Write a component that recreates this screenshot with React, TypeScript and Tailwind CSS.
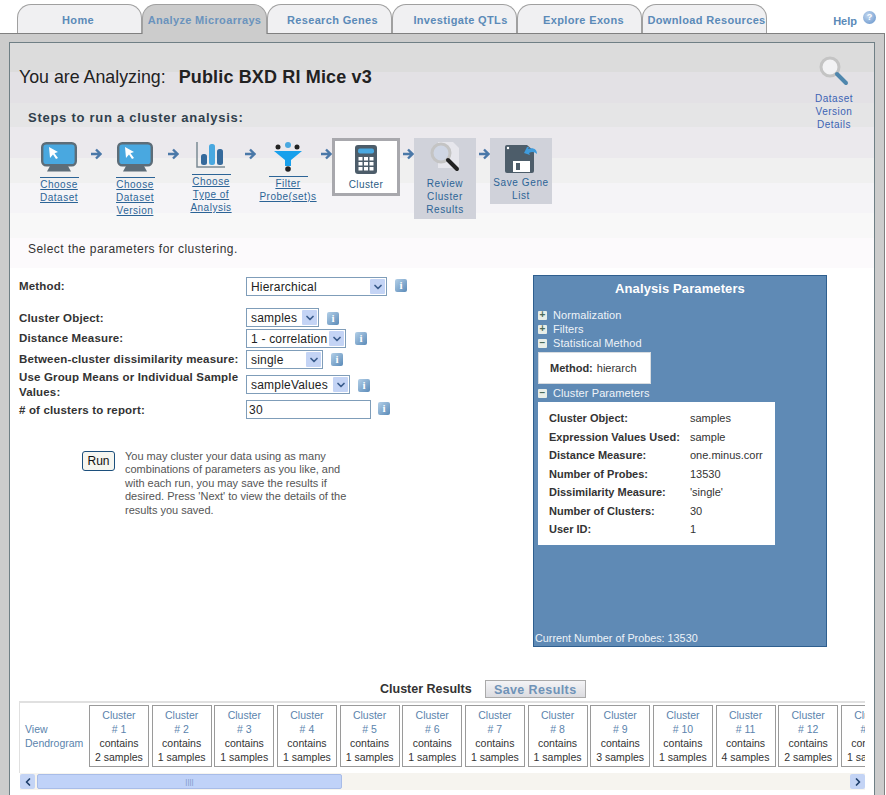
import { ChevronDown, ChevronLeft, ChevronRight } from 'lucide-react';

const tabs = [
  { label: 'Home', offset: 'pr-[3px]' },
  { label: 'Analyze Microarrays', offset: '', active: true },
  { label: 'Research Genes', offset: 'pl-[6px]' },
  { label: 'Investigate QTLs', offset: 'pl-[12px]' },
  { label: 'Explore Exons', offset: 'pl-[8px]' },
  { label: 'Download Resources', offset: 'pl-[4px]' },
];

const clusters = [
  [1, 2], [2, 1], [3, 1], [4, 1], [5, 1], [6, 1], [7, 1],
  [8, 1], [9, 3], [10, 1], [11, 4], [12, 2], [13, 1],
];

const clusterParams = [
  ['Cluster Object:', 'samples'],
  ['Expression Values Used:', 'sample'],
  ['Distance Measure:', 'one.minus.corr'],
  ['Number of Probes:', '13530'],
  ['Dissimilarity Measure:', "'single'"],
  ['Number of Clusters:', '30'],
  ['User ID:', '1'],
];

function Arrow() {
  return (
    <svg width="12" height="12" viewBox="0 0 12 12" className="shrink-0">
      <path d="M1 6h8M6 1.500 10.500 6 6 10.500" fill="none" stroke="#4a78a8" strokeWidth="2.400" />
    </svg>
  );
}

function MonitorIcon() {
  return (
    <svg width="36" height="30" viewBox="0 0 36 30">
      <rect x="1.200" y="1.200" width="33.600" height="22" rx="4" fill="#49a8e0" stroke="#5d6d78" strokeWidth="2.400" />
      <path d="M8 5l9 5-3.500 1.200L17 16l-2 1-3-4.500L9 16z" fill="#fff" />
      <path d="M9 24h18l3 5.500H6z" fill="#5d6d78" />
    </svg>
  );
}

function ChartIcon() {
  return (
    <svg width="30" height="26" viewBox="0 0 30 26">
      <path d="M1 0v25h28" fill="none" stroke="#7b8a94" strokeWidth="1.500" />
      <rect x="5" y="12" width="6" height="11" rx="2.500" fill="#356a9c" />
      <rect x="13" y="2" width="6" height="21" rx="2.500" fill="#49a8e0" />
      <rect x="21" y="7" width="6" height="16" rx="2.500" fill="#356a9c" />
    </svg>
  );
}

function FunnelIcon() {
  return (
    <svg width="30" height="30" viewBox="0 0 30 30">
      <circle cx="15" cy="3" r="3" fill="#49a8e0" />
      <circle cx="5" cy="5" r="2.500" fill="#222" />
      <circle cx="24" cy="5" r="2.500" fill="#222" />
      <path d="M1 9h28L18 18v6h-6v-6z" fill="#18a0ec" />
      <circle cx="15" cy="27" r="2.800" fill="#222" />
    </svg>
  );
}

function CalculatorIcon() {
  return (
    <svg width="22" height="29" viewBox="0 0 22 29">
      <rect width="22" height="29" rx="3" fill="#4d5d6a" />
      <rect x="3" y="3.500" width="16" height="5" rx="2" fill="#49a8e0" />
      {[12, 17, 22].map((y) =>
        [3.500, 9, 14.500].map((x) => <rect key={`${x}-${y}`} x={x} y={y} width="4" height="3.500" fill="#fff" />)
      )}
    </svg>
  );
}

function MagnifierIcon({ paper = false }: { paper?: boolean }) {
  return (
    <svg width="30" height="30" viewBox="0 0 30 30">
      {paper && <path d="M8 0h15l6 6v20H8z" fill="#e6e6ec" />}
      <circle cx="11" cy="11" r="9" fill={paper ? '#cfd6e4' : '#f2f2f4'} stroke="#c4c4c4" strokeWidth="3" />
      <path d="M18 18l9 9" stroke={paper ? '#222' : '#4f86ad'} strokeWidth="4" strokeLinecap="round" />
    </svg>
  );
}

function SaveIcon() {
  return (
    <svg width="34" height="30" viewBox="0 0 34 30">
      <path d="M1 4a2 2 0 0 1 2-2h20l7 6v20a2 2 0 0 1-2 2H3a2 2 0 0 1-2-2z" fill="#4d5d6a" />
      <rect x="9" y="18" width="17" height="11" fill="#fff" />
      <rect x="12" y="20" width="4" height="7" fill="#4d5d6a" />
      <circle cx="4" cy="5" r="1.200" fill="#fff" />
      <path d="M20 10l3-6h2l-1 2c5-2 9 0 9 5-2-2-5-3-8-1l1 2z" fill="#3f9bdc" />
    </svg>
  );
}

function InfoIcon() {
  return (
    <span className="flex h-[13px] w-[12px] shrink-0 items-center justify-center rounded-[2px] bg-[linear-gradient(135deg,#b4d0e8,#5a8ab8)] font-['Liberation_Serif',serif] text-[11px] leading-none font-bold text-white">
      i
    </span>
  );
}

function SelectBox({ value, width }: { value: string; width: string }) {
  return (
    <div className={`flex h-[19px] shrink-0 items-center justify-between border border-[#7f9db9] bg-white pr-px pl-1 text-[12px] font-normal tracking-[0.2px] text-[#222] ${width}`}>
      <span className="whitespace-nowrap">{value}</span>
      <span className="flex h-[15px] w-[15px] shrink-0 items-center justify-center rounded-[1px] bg-[#c4d4f5]">
        <ChevronDown size={12} strokeWidth={3.500} className="text-[#3a5c8c]" />
      </span>
    </div>
  );
}

function TreeToggle({ open, label }: { open?: boolean; label: string }) {
  return (
    <div className="flex h-[14px] items-center gap-[6px] text-[11px] tracking-[0.1px] text-[#eef3f8]">
      <span className="flex h-[9px] w-[9px] items-center justify-center rounded-[1px] bg-[#e8eee8] text-[10px] leading-none font-bold text-[#4a6a5a]">
        {open ? '−' : '+'}
      </span>
      {label}
    </div>
  );
}

function StepLink({ lines, width }: { lines: string[]; width: string }) {
  return (
    <div className={`${width} shrink-0 text-center text-[10px] leading-[13px] tracking-[0.5px] text-[#2c6496] underline`}>
      <div className="mx-auto h-px w-[39px] bg-[#2c6496]" />
      {lines.map((l) => (
        <div key={l} className="whitespace-nowrap">{l}</div>
      ))}
    </div>
  );
}

export default function App() {
  return (
    <div className="h-[795px] w-[886px] overflow-hidden bg-white font-['Liberation_Sans',Arial,sans-serif] text-[#333]">
      {/* Tabs */}
      <div className="flex h-[33px]">
        <div className="flex w-[773px] items-end pl-[17px]">
          {tabs.map((t) => (
            <div
              key={t.label}
              className={`flex w-[125px] items-center justify-center rounded-t-[14px] border border-b-0 border-[#a0a0a0] pt-[2px] text-[11px] font-bold tracking-[0.35px] whitespace-nowrap ${t.offset} ${
                t.active ? 'relative z-10 -mb-px h-[30px] bg-[#cccccc] text-[#6a93bd]' : 'h-[29px] bg-[#f0f0f2] text-[#5b8ab8]'
              }`}
            >
              {t.label}
            </div>
          ))}
        </div>
        <div className="flex flex-1 items-start justify-end gap-[6px] pt-[13px] pr-[10px] text-[11px] font-bold text-[#5b8ab8]">
          Help
          <span className="mt-[-2px] flex h-[13px] w-[13px] items-center justify-center rounded-full bg-[radial-gradient(circle_at_40%_35%,#c4d8f0,#5f8fc8)] text-[9px] text-white">?</span>
        </div>
      </div>

      {/* Outer frame */}
      <div className="h-[762px] w-[885px] border-t border-r border-[#808080] bg-[#cccccc] pt-[8px] pr-[9px] pl-[9px]">
        <div className="h-[760px] w-[866px] border border-[#6f7f85] bg-[linear-gradient(#dcdcdc_0,#dcdcdc_29px,#e3e1e5_29px,#e3e1e5_60px,#e5e5e6_60px,#e5e5e6_84px,#ebe9ed_84px,#ebe9ed_115px,#f0f0f0_115px,#f0f0f0_140px,#f5f4f7_140px,#f5f4f7_170px,#f8f8f8_170px,#f8f8f8_195px,#fcfafc_195px,#fcfafc_225px,#ffffff_225px)]">
          {/* Title row */}
          <div className="flex h-[66px] items-start pl-[9px]">
            <div className="mt-[23px] flex items-baseline text-[17.800px] leading-[22px] text-[#222]">
              <span>You are Analyzing:</span>
              <span className="ml-[13px] text-[18px] font-bold tracking-[0.15px]">Public BXD RI Mice v3</span>
            </div>
          </div>
          <div className="relative">
            <div className="absolute top-[-53px] right-[15px] flex w-[50px] flex-col items-center text-center text-[10px] leading-[13px] tracking-[0.5px] text-[#3c63b4]">
              <MagnifierIcon />
              <div className="mt-[6px]">Dataset</div>
              <div>Version</div>
              <div>Details</div>
            </div>
          </div>

          <div className="pl-[18px] text-[13px] leading-[18px] font-bold tracking-[0.73px] text-[#30404c]">
            Steps to run a cluster analysis:
          </div>

          {/* Steps */}
          <div className="mt-[11px] flex h-[81px] items-start pl-[18px]">
            <div className="flex w-[62px] shrink-0 flex-col items-center pt-[4px]">
              <MonitorIcon />
              <div className="mt-[5px]"><StepLink lines={['Choose', 'Dataset']} width="w-[60px]" /></div>
            </div>
            <div className="mt-[10px]"><Arrow /></div>
            <div className="ml-[3px] flex w-[60px] shrink-0 flex-col items-center pt-[4px]">
              <MonitorIcon />
              <div className="mt-[5px]"><StepLink lines={['Choose', 'Dataset', 'Version']} width="w-[60px]" /></div>
            </div>
            <div className="mt-[10px] ml-[2px]"><Arrow /></div>
            <div className="ml-[2px] flex w-[60px] shrink-0 flex-col items-center pt-[4px]">
              <ChartIcon />
              <div className="mt-[6px]"><StepLink lines={['Choose', 'Type of', 'Analysis']} width="w-[60px]" /></div>
            </div>
            <div className="mt-[10px] ml-[3px]"><Arrow /></div>
            <div className="ml-[2px] flex w-[60px] shrink-0 flex-col items-center pt-[4px]">
              <FunnelIcon />
              <div className="mt-[4px]"><StepLink lines={['Filter', 'Probe(set)s']} width="w-[60px]" /></div>
            </div>
            <div className="mt-[10px] ml-[2px]"><Arrow /></div>
            <div className="flex h-[58px] w-[68px] shrink-0 flex-col items-center border-[3px] border-[#a8a8ad] bg-white pt-[4px] text-[10px] tracking-[0.4px] text-[#2c5c84]">
              <CalculatorIcon />
              <div className="mt-[3px]">Cluster</div>
            </div>
            <div className="mt-[10px] ml-[2px]"><Arrow /></div>
            <div className="flex h-[81px] w-[62px] shrink-0 flex-col items-center bg-[#d0d2da] pt-[4px] text-center text-[10px] leading-[13px] tracking-[0.6px] text-[#2c6496]">
              <MagnifierIcon paper />
              <div className="mt-[5px]">Review</div>
              <div>Cluster</div>
              <div>Results</div>
            </div>
            <div className="mt-[10px] ml-[2px]"><Arrow /></div>
            <div className="flex h-[66px] w-[62px] shrink-0 flex-col items-center bg-[#d0d2da] pt-[5px] text-center text-[10px] leading-[13px] tracking-[0.6px] text-[#2c6496]">
              <SaveIcon />
              <div className="mt-[3px]">Save Gene</div>
              <div>List</div>
            </div>
          </div>

          <div className="mt-[22px] pl-[18px] text-[12px] leading-[16px] tracking-[0.46px] text-[#333]">
            Select the parameters for clustering.
          </div>

          {/* Form + panel */}
          <div className="mt-[18px] flex items-start">
            <div className="w-[523px] shrink-0 pt-[2px]">
              <div className="pl-[9px] text-[11.500px] font-bold tracking-[0.16px] text-[#333]">
                <div className="flex items-start">
                  <div className="w-[227px] shrink-0 pt-[1px]">Method:</div>
                  <SelectBox value="Hierarchical" width="w-[141px]" />
                  <div className="mt-[2px] ml-[8px]"><InfoIcon /></div>
                </div>
                <div className="mt-[12px] flex items-start">
                  <div className="w-[227px] shrink-0 pt-[2px]">Cluster Object:</div>
                  <SelectBox value="samples" width="w-[73px]" />
                  <div className="mt-[4px] ml-[8px]"><InfoIcon /></div>
                </div>
                <div className="mt-[2px] flex items-start">
                  <div className="w-[227px] shrink-0 pt-[1px]">Distance Measure:</div>
                  <SelectBox value="1 - correlation" width="w-[100px]" />
                  <div className="mt-[3px] ml-[9px]"><InfoIcon /></div>
                </div>
                <div className="mt-[2px] flex items-start">
                  <div className="w-[227px] shrink-0 pt-[1px] whitespace-nowrap">Between-cluster dissimilarity measure:</div>
                  <SelectBox value="single" width="w-[77px]" />
                  <div className="mt-[3px] ml-[8px]"><InfoIcon /></div>
                </div>
                <div className="mt-[6px] flex items-start">
                  <div className="mt-[-5px] mb-[-6px] w-[227px] shrink-0 leading-[15px]">Use Group Means or Individual Sample Values:</div>
                  <SelectBox value="sampleValues" width="w-[104px]" />
                  <div className="mt-[4px] ml-[8px]"><InfoIcon /></div>
                </div>
                <div className="mt-[6px] flex items-start">
                  <div className="w-[227px] shrink-0 pt-[2px]"># of clusters to report:</div>
                  <div className="flex h-[19px] w-[125px] items-center border border-[#7f9db9] bg-white pl-[2px] text-[12px] font-normal tracking-[0.3px] text-[#222]">30</div>
                  <div className="mt-[2px] ml-[7px]"><InfoIcon /></div>
                </div>
              </div>
              <div className="mt-[31px] flex items-start pl-[72px]">
                <button className="h-[20px] w-[33px] rounded-[3px] border border-[#1c4f7c] bg-[#f6f6f0] text-[12px] text-[#111]">Run</button>
                <p className="mt-[-1px] ml-[10px] w-[228px] text-[11px] leading-[13.500px] text-[#555]">
                  You may cluster your data using as many combinations of parameters as you like, and with each run, you may save the results if desired. Press 'Next' to view the details of the results you saved.
                </p>
              </div>
            </div>

            {/* Analysis Parameters */}
            <div className="flex h-[372px] w-[294px] shrink-0 flex-col border border-[#2f5f8f] bg-[#5f8ab5] pl-[4px]">
              <div className="mt-[5px] mb-[11px] pr-[4px] text-center text-[13px] leading-[16px] font-bold tracking-[0.1px] text-white">Analysis Parameters</div>
              <TreeToggle label="Normalization" />
              <TreeToggle label="Filters" />
              <TreeToggle open label="Statistical Method" />
              <div className="mt-[2px] flex h-[32px] w-[113px] items-center border border-[#d8dce0] bg-white pl-[11px] text-[11px] text-[#333]">
                <b className="mr-[4px]">Method:</b> hierarch
              </div>
              <div className="mt-[2px]"><TreeToggle open label="Cluster Parameters" /></div>
              <div className="mt-[2px] flex h-[143px] w-[237px] flex-col bg-white px-[11px] pt-[7px] text-[11px] text-[#333]">
                {clusterParams.map(([k, v]) => (
                  <div key={k} className="flex h-[18.500px] items-center">
                    <b className="w-[141px] shrink-0 whitespace-nowrap">{k}</b>
                    <span>{v}</span>
                  </div>
                ))}
              </div>
              <div className="mt-auto mb-[1px] ml-[-3px] text-[10.800px] leading-[14px] text-[#eef3f8]">Current Number of Probes: 13530</div>
            </div>
          </div>

          {/* Cluster Results */}
          <div className="mt-[33px] flex h-[18px] items-center pl-[370px]">
            <span className="pt-[1px] text-[12.500px] font-bold text-[#333]">Cluster Results</span>
            <button className="ml-[13px] h-[18px] w-[101px] border border-[#aaaaaa] bg-[linear-gradient(#f4f4f6,#dcdce0)] text-[12.500px] font-bold tracking-[0.4px] text-[#6f93b8]">Save Results</button>
          </div>
          <div className="mt-[3px] ml-[9px] h-[72px] w-[846px] overflow-hidden border-t-2 border-l border-[#e0e0e0] bg-white">
            <div className="flex items-start gap-[2.670px] pt-[2px]">
              <div className="w-[66.300px] shrink-0 pt-[17px] pl-[5px] text-[10.500px] leading-[14px] text-[#5b84ad]">
                View Dendrogram
              </div>
              {clusters.map(([n, c]) => (
                <div key={n} className="h-[62px] w-[60px] shrink-0 border border-[#9a9a9a] pt-[2px] text-center text-[10.500px] leading-[14px]">
                  <div className="text-[#5b84ad]">Cluster</div>
                  <div className="text-[#5b84ad]"># {n}</div>
                  <div className="text-[#333]">contains</div>
                  <div className="whitespace-nowrap text-[#333]">{c} samples</div>
                </div>
              ))}
            </div>
          </div>
          {/* Scrollbar */}
          <div className="ml-[10px] flex h-[17px] w-[845px] items-center bg-[#f6f4ef]">
            <span className="flex h-[15px] w-[15px] items-center justify-center rounded-[2px] bg-[#c4d4f5]">
              <ChevronLeft size={12} strokeWidth={3.500} className="text-[#20406c]" />
            </span>
            <div className="ml-[2px] flex h-[15px] w-[305px] items-center justify-center rounded-[2px] border border-[#a8bce8] bg-[#c0d2f8] text-[8px] text-[#7f97c8]">
              ||||
            </div>
            <span className="ml-auto flex h-[15px] w-[15px] items-center justify-center rounded-[2px] bg-[#c4d4f5]">
              <ChevronRight size={12} strokeWidth={3.500} className="text-[#20406c]" />
            </span>
          </div>
        </div>
      </div>
    </div>
  );
}
